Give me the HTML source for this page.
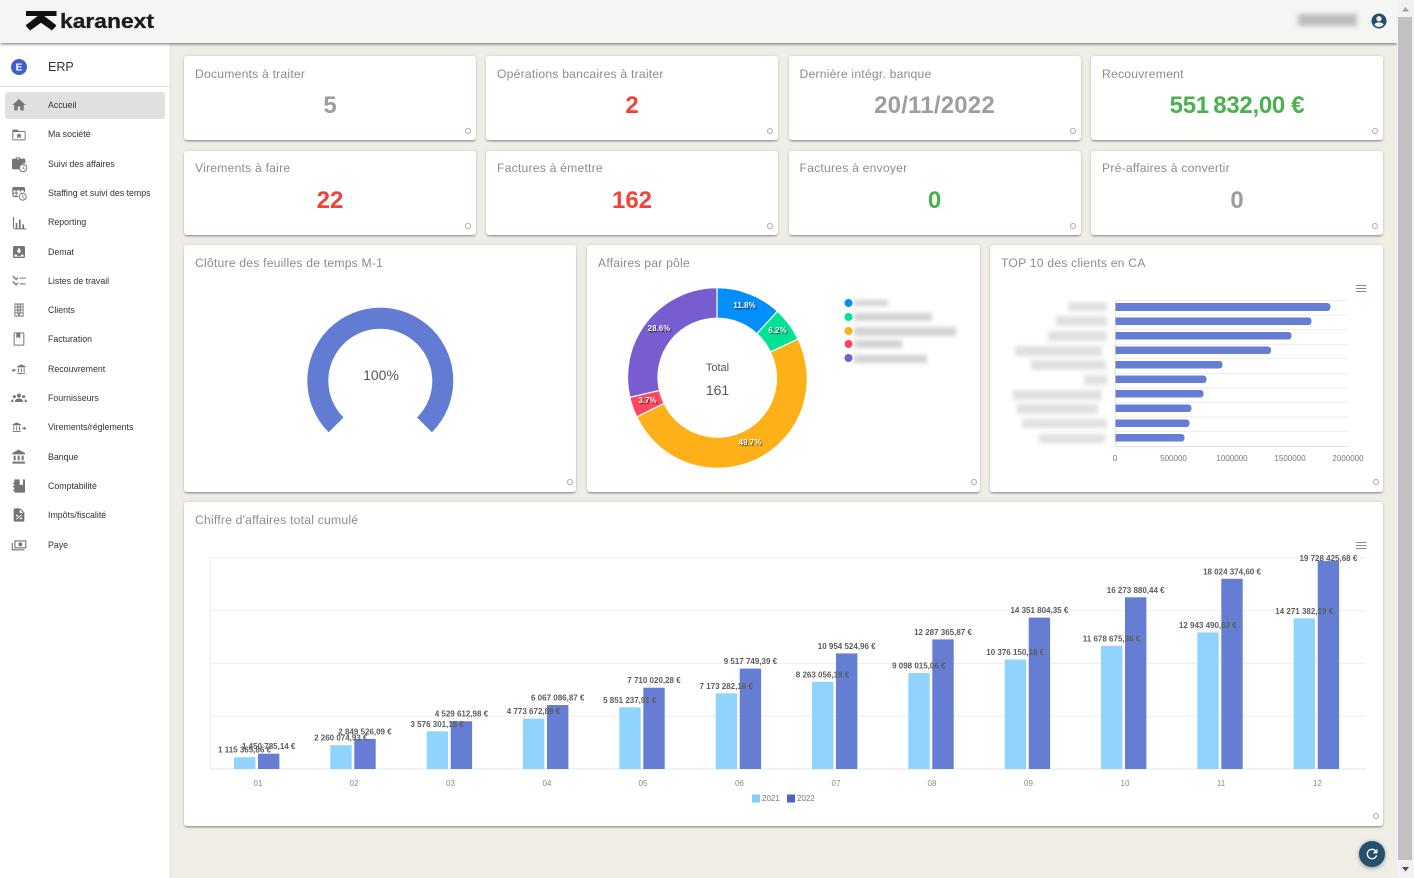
<!DOCTYPE html>
<html lang="fr">
<head>
<meta charset="utf-8">
<title>karanext ERP</title>
<style>
html,body{margin:0;padding:0;width:1414px;height:878px;overflow:hidden;background:#f0ede7;font-family:"Liberation Sans",sans-serif}
.abs{position:absolute}
#hdr{position:absolute;left:0;top:0;width:1397px;height:43px;background:#f5f5f5;box-shadow:0 1px 3px rgba(0,0,0,.55);z-index:3}
#side{position:absolute;left:0;top:43px;width:170px;height:835px;background:#fff;border-right:1px solid #e2e0dc;z-index:1}
.sel{position:absolute;left:5px;top:92px;width:160px;height:27px;background:#e0e0e0;border-radius:3px;z-index:2}
.it{position:absolute;left:48px;font-size:8.8px;line-height:12px;color:#333;z-index:2;white-space:nowrap}
.ic{position:absolute;left:11px;width:16px;height:16px;z-index:2;fill:#757575}
.card{position:absolute;background:#fff;border-radius:3px;box-shadow:0 2px 2px -1px rgba(60,55,45,.55),0 0 3px rgba(60,55,45,.18);z-index:1}
.t{position:absolute;left:11px;top:10px;font-size:12.2px;line-height:16px;color:#8c8c8c;white-space:nowrap;letter-spacing:.2px}
.t2{top:9px}
.v{position:absolute;left:0;right:0;top:35px;text-align:center;font-size:24px;line-height:30px;font-weight:bold;color:#9e9e9e;white-space:nowrap}
.r{position:absolute;right:5px;bottom:6px;width:4px;height:4px;border:1px solid #aaa;border-radius:50%;box-sizing:content-box}
.b{position:absolute;background:#d2d2d2;filter:blur(2px);z-index:2}
.l{background:#e0e0e0}
#sb{position:absolute;left:1397px;top:0;width:17px;height:878px;background:#f1f1f1;z-index:4}
#th{position:absolute;left:1px;top:17px;width:14px;height:843px;background:#c1c1c1}
#ov{position:absolute;left:0;top:0;z-index:2}
</style>
</head>
<body>
<div id="hdr">
<svg class="abs" style="left:0;top:0" width="170" height="43">
<path d="M26 11h30.500v5H26z" fill="#111"/>
<path d="M41 13.500L56 25l0 1-4 4.500-11-7.800-11 7.800-4-4.500v-1z" fill="#111"/>
<text x="60" y="28" font-family="Liberation Sans" font-weight="bold" font-size="20.500" fill="#1c1c1c" stroke="#1c1c1c" stroke-width=".3" textLength="94" lengthAdjust="spacingAndGlyphs">karanext</text>
</svg>
<div class="abs" style="left:1298px;top:14px;width:59px;height:12px;background:#bdbdbd;filter:blur(2.500px)"></div>
<svg class="abs" style="left:1370px;top:12px" width="18" height="18" viewBox="0 0 24 24"><path fill="#1f4e6e" d="M12 2C6.480 2 2 6.480 2 12s4.480 10 10 10 10-4.480 10-10S17.520 2 12 2zm0 3.500c1.930 0 3.500 1.570 3.500 3.500s-1.570 3.500-3.500 3.500S8.500 10.930 8.500 9s1.570-3.500 3.500-3.500zM12 20c-2.500 0-4.700-1.200-6-3.100 0-2 4-3.100 6-3.100s6 1.100 6 3.100C16.700 18.800 14.500 20 12 20z"/></svg>
</div>

<div id="side"></div>
<svg class="abs" style="left:11px;top:59px;z-index:2" width="16" height="16"><circle cx="8" cy="8" r="8" fill="#3f5fcb"/><text x="8" y="11.500" text-anchor="middle" font-family="Liberation Sans" font-weight="bold" font-size="10" fill="#fff">E</text></svg>
<div class="abs" style="left:48px;top:60px;font-size:12.5px;line-height:15px;color:#333;z-index:2">ERP</div>
<div class="abs" style="left:0;top:86px;width:170px;height:1px;background:#e0e0e0;z-index:2"></div>
<div class="sel"></div>

<svg class="ic" style="top:97px" viewBox="0 0 24 24"><path d="M10 20v-6h4v6h5v-8h3L12 3 2 12h3v8z"/></svg>
<div class="it" style="top:98.500px">Accueil</div>
<svg class="ic" style="top:127px" viewBox="0 0 24 24"><path d="M20 6h-8l-2-2H4c-1.100 0-2 .9-2 2v12c0 1.100.9 2 2 2h16c1.100 0 2-.9 2-2V8c0-1.100-.9-2-2-2zm.5 12.500H3.500V7.500h17zM12 9.500l-4 3.500h1.300v3.500h2v-2h1.400v2h2V13H16z"/></svg>
<div class="it" style="top:127.500px">Ma société</div>
<svg class="ic" style="top:156px" viewBox="0 0 24 24"><path d="M15 4h-1c0-1.100-.9-2-2-2H9c-1.100 0-2 .9-2 2H3.500C2.400 4 1.500 4.900 1.500 6v12c0 1.100.9 2 2 2h10a7 7 0 0 1 8-9V6c0-1.100-.9-2-2-2h-4.500zM9 3.500h3V5H9z"/><circle cx="18" cy="18" r="5.500" fill="none" stroke="#757575" stroke-width="1.500"/><path d="M17.500 15h1.200v3l2 1.200-.6 1-2.600-1.600z"/></svg>
<div class="it" style="top:157.500px">Suivi des affaires</div>
<svg class="ic" style="top:185px" viewBox="0 0 24 24"><path d="M19 3H4c-1.100 0-2 .9-2 2v11c0 1.100.9 2 2 2h7v-1.700H8.500V13H11v-1.500H8.500V8h5v2h1.700V8h4v2.500H21V5c0-1.100-.9-2-2-2zM7 16.300H3.700V13H7zm0-4.800H3.700V8H7z"/><circle cx="17.500" cy="17.500" r="5.300" fill="none" stroke="#757575" stroke-width="1.500"/><path d="M17 14.500h1.200v2.800l2 1.200-.6 1-2.600-1.600z"/></svg>
<div class="it" style="top:186.500px">Staffing et suivi des temps</div>
<svg class="ic" style="top:215px" viewBox="0 0 24 24"><path d="M3 3h1.500v17H3zM4.500 20H23v1.500H4.500zM7 12h2.500v8H7zM12 7h2.500v13H12zM17 14h2.500v6H17z"/></svg>
<div class="it" style="top:215.500px">Reporting</div>
<svg class="ic" style="top:244px" viewBox="0 0 24 24"><path d="M19 3H5c-1.100 0-2 .9-2 2v14c0 1.100.9 2 2 2h14c1.100 0 2-.9 2-2V5c0-1.100-.9-2-2-2z"/><path fill="#fff" d="M10.500 6.500h3V10H16l-4 4-4-4h2.500zM5 16h3.500c.4 1.400 1.800 2.300 3.500 2.300s3.100-.9 3.500-2.300H19v3H5z"/></svg>
<div class="it" style="top:245.500px">Demat</div>
<svg class="ic" style="top:273px" viewBox="0 0 24 24"><path d="M11 7H2v1.500h9zm0 8.500H2V17h9zM16.340 11l-3.540-3.540 1.410-1.410 2.120 2.120 4.240-4.240L22 5.340zm0 8l-3.540-3.540 1.410-1.410 2.120 2.120 4.240-4.240L22 13.340z" transform="matrix(-1 0 0 1 24 0)"/></svg>
<div class="it" style="top:274.500px">Listes de travail</div>
<svg class="ic" style="top:302px" viewBox="0 0 24 24"><path fill="#8a8a8a" d="M5 2h14v20H5zm1.500 2v2.500h2.500V4zm4.500 0v2.500h2V4zm4 0v2.500h2.500V4zM6.500 8.500V11h2.500V8.500zm4.500 0V11h2V8.500zm4 0V11h2.500V8.500zM6.500 13v2.500h2.500V13zm4.500 0v2.500h2V13zm4 0v2.500h2.500V13zM6.500 17.500V20h4v-2.500zm7 0V20h4v-2.500z"/></svg>
<div class="it" style="top:303.500px">Clients</div>
<svg class="ic" style="top:331px" viewBox="0 0 24 24"><path d="M18 2H6c-1.100 0-2 .9-2 2v16c0 1.100.9 2 2 2h12c1.100 0 2-.9 2-2V4c0-1.100-.9-2-2-2zm.5 18.500h-13v-17H8V11l3-2 3 2V3.500h4.500z"/></svg>
<div class="it" style="top:332.500px">Facturation</div>
<svg class="ic" style="top:361px" viewBox="0 0 24 24"><path d="M15.500 5L9 8.300v1.200h13V8.300zM9.500 18h12v1.300h-12zM10.500 11h1.500v6h-1.500zM14.700 11h1.500v6h-1.500zM19 11h1.500v6H19zM7 13H4v-2l-3 3 3 3v-2h3z"/></svg>
<div class="it" style="top:362.500px">Recouvrement</div>
<svg class="ic" style="top:390px" viewBox="0 0 24 24"><circle cx="12" cy="8.500" r="3"/><circle cx="5" cy="10" r="2.300"/><circle cx="19" cy="10" r="2.300"/><path d="M6 18v-1.500c0-2 2.700-3.500 6-3.500s6 1.500 6 3.500V18zM0 18v-1.200c0-1.500 1.500-2.600 4-2.800-.5.7-.5 1.500-.5 2.500V18zM24 18v-1.200c0-1.500-1.500-2.600-4-2.800.5.7.5 1.500.5 2.500V18z"/></svg>
<div class="it" style="top:391.500px">Fournisseurs</div>
<svg class="ic" style="top:419px" viewBox="0 0 24 24"><path d="M8.500 5L2 8.300v1.200h13V8.300zM2.500 18h12v1.300h-12zM3.500 11H5v6H3.500zM7.700 11h1.500v6H7.700zM12 11h1.500v6H12zM17 13h3v-2l3 3-3 3v-2h-3z"/></svg>
<div class="it" style="top:420.500px">Virements/réglements</div>
<svg class="ic" style="top:449px" viewBox="0 0 24 24"><path d="M4 10v7h3v-7H4zm6 0v7h3v-7h-3zM2 22h19v-3H2v3zm14-12v7h3v-7h-3zm-4.500-9L2 6v2h19V6l-9.500-5z"/></svg>
<div class="it" style="top:450.500px">Banque</div>
<svg class="ic" style="top:478px" viewBox="0 0 24 24"><path d="M6 2h7v9l2.500-1.500L18 11V2h2c.6 0 1 .4 1 1v18c0 .6-.4 1-1 1H6c-.6 0-1-.4-1-1v-2H3v-2h2v-3H3v-2h2V9H3V7h2V3c0-.6.4-1 1-1z"/></svg>
<div class="it" style="top:479.500px">Comptabilité</div>
<svg class="ic" style="top:507px" viewBox="0 0 24 24"><path d="M14 2H6c-1.100 0-2 .9-2 2v16c0 1.100.9 2 2 2h12c1.100 0 2-.9 2-2V8zm-5 9.500a1.500 1.500 0 1 1 0 3 1.500 1.500 0 0 1 0-3zm6 7a1.500 1.500 0 1 1 0-3 1.500 1.500 0 0 1 0 3zm-6.500.5L7.500 18l8-7 1 1zM13 9V3.500L18.500 9z"/></svg>
<div class="it" style="top:508.500px">Impôts/fiscalité</div>
<svg class="ic" style="top:537px" viewBox="0 0 24 24"><path d="M5 5h18v12H5zm1.700 1.700v8.600h14.600V6.700zM14 8a3 3 0 1 1 0 6 3 3 0 0 1 0-6zM1 9h1.700v9.300H20V20H1z"/></svg>
<div class="it" style="top:538.500px">Paye</div>

<div class="card" style="left:184px;top:56px;width:292px;height:84px"><div class="t">Documents à traiter</div><div class="v">5</div><div class="r"></div></div>
<div class="card" style="left:486px;top:56px;width:292px;height:84px"><div class="t">Opérations bancaires à traiter</div><div class="v" style="color:#f44336">2</div><div class="r"></div></div>
<div class="card" style="left:788.500px;top:56px;width:292px;height:84px"><div class="t">Dernière intégr. banque</div><div class="v" style="letter-spacing:.2px">20/11/2022</div><div class="r"></div></div>
<div class="card" style="left:1091px;top:56px;width:292px;height:84px"><div class="t">Recouvrement</div><div class="v" style="color:#4caf50;letter-spacing:-.3px">551&#8201;832,00 €</div><div class="r"></div></div>

<div class="card" style="left:184px;top:151px;width:292px;height:84px"><div class="t t2">Virements à faire</div><div class="v" style="color:#f44336">22</div><div class="r"></div></div>
<div class="card" style="left:486px;top:151px;width:292px;height:84px"><div class="t t2">Factures à émettre</div><div class="v" style="color:#f44336">162</div><div class="r"></div></div>
<div class="card" style="left:788.500px;top:151px;width:292px;height:84px"><div class="t t2">Factures à envoyer</div><div class="v" style="color:#4caf50">0</div><div class="r"></div></div>
<div class="card" style="left:1091px;top:151px;width:292px;height:84px"><div class="t t2">Pré-affaires à convertir</div><div class="v">0</div><div class="r"></div></div>

<div class="card" style="left:184px;top:245px;width:392px;height:247px"><div class="t">Clôture des feuilles de temps M-1</div><div class="r" style="right:3px;bottom:7px"></div></div>
<div class="card" style="left:587px;top:245px;width:393px;height:247px"><div class="t">Affaires par pôle</div><div class="r" style="right:3px;bottom:7px"></div></div>
<div class="card" style="left:990px;top:245px;width:393px;height:247px"><div class="t">TOP 10 des clients en CA</div><div class="r" style="right:4px;bottom:7px"></div></div>
<div class="card" style="left:184px;top:502px;width:1199px;height:324px"><div class="t">Chiffre d'affaires total cumulé</div><div class="r" style="right:4px;bottom:7px"></div></div>

<div class="b" style="left:854px;top:300px;width:34px;height:6px"></div>
<div class="b" style="left:854px;top:313px;width:78px;height:8px"></div>
<div class="b" style="left:854px;top:327px;width:102px;height:9px"></div>
<div class="b" style="left:854px;top:340px;width:48px;height:8px"></div>
<div class="b" style="left:854px;top:355px;width:73px;height:8px"></div>

<div class="b l" style="left:1068px;top:302px;width:39px;height:9px"></div>
<div class="b l" style="left:1056px;top:316px;width:51px;height:10px"></div>
<div class="b l" style="left:1048px;top:331px;width:59px;height:10px"></div>
<div class="b l" style="left:1015px;top:346px;width:87px;height:10px"></div>
<div class="b l" style="left:1031px;top:360px;width:75px;height:10px"></div>
<div class="b l" style="left:1084px;top:375px;width:23px;height:10px"></div>
<div class="b l" style="left:1013px;top:390px;width:89px;height:10px"></div>
<div class="b l" style="left:1017px;top:404px;width:81px;height:10px"></div>
<div class="b l" style="left:1022px;top:419px;width:85px;height:9px"></div>
<div class="b l" style="left:1039px;top:434px;width:66px;height:9px"></div>

<svg id="ov" width="1414" height="878" font-family="Liberation Sans">
<!-- gauge -->
<path d="M328.700 432.300A73 73 0 1 1 431.900 432.300L417.100 417.500A52 52 0 1 0 343.500 417.500Z" fill="#617cd2"/>
<text x="381" y="380" text-anchor="middle" font-size="14" fill="#555">100%</text>

<!-- donut -->
<g stroke="#fff" stroke-width="1.200">
<path fill="#008ffb" d="M717 287.700A89.500 89.500 0 0 1 777.460 311.200L756.850 333.700A59 59 0 0 0 717 318.200Z"/>
<path fill="#00e396" d="M777.460 311.200A89.500 89.500 0 0 1 797.980 339.090L770.380 352.080A59 59 0 0 0 756.850 333.700Z"/>
<path fill="#feb019" d="M797.980 339.090A89.500 89.500 0 1 1 636.750 416.820L664.090 403.320A59 59 0 1 0 770.380 352.080Z"/>
<path fill="#ff4560" d="M636.750 416.820A89.500 89.500 0 0 1 629.780 397.270L659.500 390.430A59 59 0 0 0 664.090 403.320Z"/>
<path fill="#775dd0" d="M629.780 397.270A89.500 89.500 0 0 1 717 287.700L717 318.200A59 59 0 0 0 659.500 390.430Z"/>
</g>
<g font-size="8" font-weight="bold" fill="#fff" text-anchor="middle" style="text-shadow:1px 1px 1px rgba(0,0,0,.7)">
<text x="744.500" y="308">11.8%</text>
<text x="777.500" y="333">6.2%</text>
<text x="750" y="445">49.7%</text>
<text x="647.500" y="403">3.7%</text>
<text x="659" y="331">28.6%</text>
</g>
<text x="717.500" y="371" text-anchor="middle" font-size="11" fill="#555">Total</text>
<text x="717.500" y="395" text-anchor="middle" font-size="14" fill="#555">161</text>
<circle cx="848.500" cy="303" r="4" fill="#008ffb"/>
<circle cx="848.500" cy="317" r="4" fill="#00e396"/>
<circle cx="848.500" cy="331" r="4" fill="#feb019"/>
<circle cx="848.500" cy="344" r="4" fill="#ff4560"/>
<circle cx="848.500" cy="358" r="4" fill="#775dd0"/>

<!-- top 10 -->
<g stroke="#eeeeee" stroke-width="1">
<path d="M1115 300.500H1348M1115 315H1348M1115 329.500H1348M1115 344.500H1348M1115 358.500H1348M1115 373.500H1348M1115 388H1348M1115 402.500H1348M1115 417H1348M1115 431.500H1348"/>
</g>
<path d="M1115.500 300V446.500H1348.500" fill="none" stroke="#e2e2e2"/>
<g fill="#667dd4">
<path d="M1115.500 303h211.500a3.500 3.500 0 0 1 3.500 3.500v1a3.500 3.500 0 0 1-3.500 3.500h-211.500z"/>
<path d="M1115.500 317.500h193a3 3 0 0 1 3 3v1.500a3 3 0 0 1-3 3h-193z"/>
<path d="M1115.500 332h173a3 3 0 0 1 3 3v1.500a3 3 0 0 1-3 3h-173z"/>
<path d="M1115.500 346.500h152.500a3 3 0 0 1 3 3v1.500a3 3 0 0 1-3 3h-152.500z"/>
<path d="M1115.500 361h104a3 3 0 0 1 3 3v1.500a3 3 0 0 1-3 3h-104z"/>
<path d="M1115.500 375.500h88a3 3 0 0 1 3 3v1.500a3 3 0 0 1-3 3h-88z"/>
<path d="M1115.500 390h85a3 3 0 0 1 3 3v1.500a3 3 0 0 1-3 3h-85z"/>
<path d="M1115.500 404.500h73a3 3 0 0 1 3 3v1.500a3 3 0 0 1-3 3h-73z"/>
<path d="M1115.500 419.500h71a3 3 0 0 1 3 3v1.500a3 3 0 0 1-3 3h-71z"/>
<path d="M1115.500 434h66a3 3 0 0 1 3 3v1.500a3 3 0 0 1-3 3h-66z"/>
</g>
<g font-size="8" fill="#777" text-anchor="middle">
<text x="1115" y="461">0</text><text x="1173.500" y="461">500000</text><text x="1232" y="461">1000000</text><text x="1290" y="461">1500000</text><text x="1348" y="461">2000000</text>
</g>
<path d="M1356 285.500h10.500M1356 288.500h10.500M1356 291.500h10.500" stroke="#7a8c9b" fill="none"/>
<path d="M1356 542.500h10.500M1356 545.500h10.500M1356 548.500h10.500" stroke="#7a8c9b" fill="none"/>

<!-- big chart -->
<path d="M210.500 558V769M210 558H1366M210 610.700H1366M210 663.500H1366M210 716.200H1366" fill="none" stroke="#eeeeee"/>
<path d="M210 769H1366" stroke="#eeeeee" stroke-width="1.500"/>
<g fill="#90d4fd">
<rect x="234" y="757.200" width="21.400" height="11.800"/>
<rect x="330.300" y="745.200" width="21.400" height="23.800"/>
<rect x="426.700" y="731.300" width="21.400" height="37.700"/>
<rect x="523" y="718.600" width="21.400" height="50.400"/>
<rect x="619.300" y="707.300" width="21.400" height="61.700"/>
<rect x="715.700" y="693.300" width="21.400" height="75.700"/>
<rect x="812" y="681.800" width="21.400" height="87.200"/>
<rect x="908.300" y="673" width="21.400" height="96"/>
<rect x="1004.700" y="659.500" width="21.400" height="109.500"/>
<rect x="1101" y="645.800" width="21.400" height="123.200"/>
<rect x="1197.300" y="632.400" width="21.400" height="136.600"/>
<rect x="1293.700" y="618.400" width="21.400" height="150.600"/>
</g>
<g fill="#667dd4">
<rect x="258" y="753.700" width="21.400" height="15.300"/>
<rect x="354.300" y="738.900" width="21.400" height="30.100"/>
<rect x="450.700" y="721.200" width="21.400" height="47.800"/>
<rect x="547" y="705" width="21.400" height="64"/>
<rect x="643.300" y="687.700" width="21.400" height="81.300"/>
<rect x="739.700" y="668.600" width="21.400" height="100.400"/>
<rect x="836" y="653.400" width="21.400" height="115.600"/>
<rect x="932.300" y="639.400" width="21.400" height="129.600"/>
<rect x="1028.700" y="617.600" width="21.400" height="151.400"/>
<rect x="1125" y="597.300" width="21.400" height="171.700"/>
<rect x="1221.300" y="578.800" width="21.400" height="190.200"/>
<rect x="1317.700" y="560.900" width="21.400" height="208.100"/>
</g>
<g font-size="8" font-weight="bold" fill="#5c5c5c" text-anchor="middle">
<text x="244.500" y="752.700">1 115 365,86 €</text><text x="268.700" y="749.200">1 450 785,14 €</text>
<text x="340.800" y="740.700">2 260 074,93 €</text><text x="365" y="734.400">2 849 526,09 €</text>
<text x="437.200" y="726.800">3 576 301,15 €</text><text x="461.400" y="716.700">4 529 612,98 €</text>
<text x="533.500" y="714.100">4 773 672,89 €</text><text x="557.700" y="700.500">6 067 086,87 €</text>
<text x="629.800" y="702.800">5 851 237,91 €</text><text x="654" y="683.200">7 710 020,28 €</text>
<text x="726.200" y="688.800">7 173 282,18 €</text><text x="750.400" y="664.100">9 517 749,39 €</text>
<text x="822.500" y="677.300">8 263 056,18 €</text><text x="846.700" y="648.900">10 954 524,96 €</text>
<text x="918.800" y="668.500">9 098 015,06 €</text><text x="943" y="634.900">12 287 365,87 €</text>
<text x="1015.200" y="655">10 376 150,18 €</text><text x="1039.400" y="613.100">14 351 804,35 €</text>
<text x="1111.500" y="641.300">11 678 675,36 €</text><text x="1135.700" y="592.800">16 273 880,44 €</text>
<text x="1207.800" y="627.900">12 943 490,63 €</text><text x="1232" y="574.300">18 024 374,60 €</text>
<text x="1304.200" y="613.900">14 271 382,19 €</text><text x="1328.400" y="561">19 728 425,68 €</text>
</g>
<g font-size="8" fill="#888" text-anchor="middle">
<text x="258" y="786">01</text><text x="354" y="786">02</text><text x="450.500" y="786">03</text><text x="547" y="786">04</text><text x="643" y="786">05</text><text x="739.500" y="786">06</text><text x="836" y="786">07</text><text x="932" y="786">08</text><text x="1028.500" y="786">09</text><text x="1125" y="786">10</text><text x="1221" y="786">11</text><text x="1317.500" y="786">12</text>
</g>
<rect x="752" y="794.500" width="8" height="8" fill="#80cffc"/>
<text x="762" y="801" font-size="8" fill="#777">2021</text>
<rect x="787" y="794.500" width="8" height="8" fill="#4a63c4"/>
<text x="797" y="801" font-size="8" fill="#777">2022</text>

<!-- fab -->
<circle cx="1372" cy="854" r="13" fill="#24506e" style="filter:drop-shadow(0 1px 2px rgba(0,0,0,.4))"/>
<g transform="translate(1364 846) scale(.67)"><path fill="#fff" d="M17.650 6.350A7.958 7.958 0 0 0 12 4c-4.420 0-7.990 3.580-7.990 8s3.570 8 7.990 8c3.730 0 6.840-2.550 7.730-6h-2.080A5.990 5.990 0 0 1 12 18c-3.310 0-6-2.690-6-6s2.690-6 6-6c1.660 0 3.140.69 4.220 1.780L13 11h7V4z"/></g>
</svg>

<div id="sb"><div id="th"></div>
<svg class="abs" style="left:0;top:0" width="17" height="878"><path d="M5 11.500h7L8.500 7z" fill="#a0a0a0"/><path d="M5 867h7l-3.500 4.500z" fill="#505050"/></svg>
</div>
</body>
</html>
